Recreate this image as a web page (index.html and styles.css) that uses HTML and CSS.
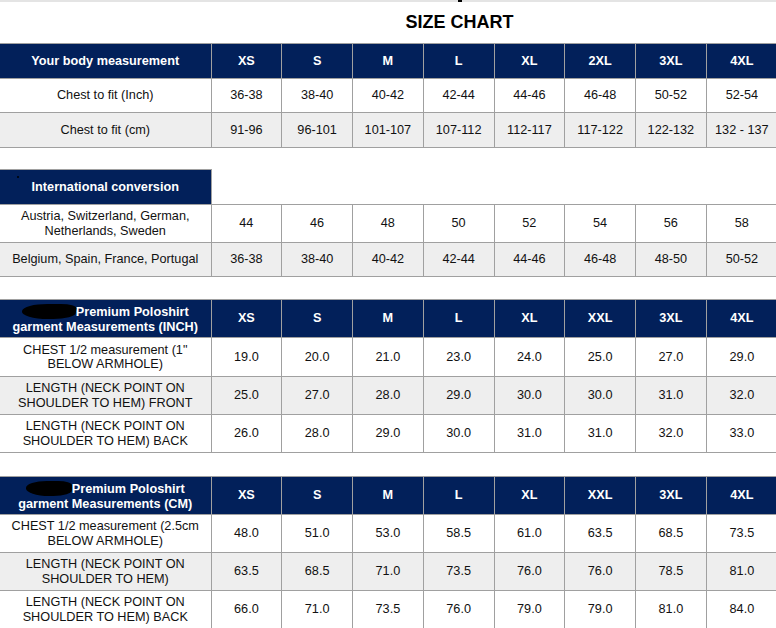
FILE: index.html
```html
<!DOCTYPE html>
<html lang="en">
<head>
<meta charset="utf-8">
<title>Size Chart</title>
<link rel="stylesheet" href="styles.css">
</head>
<body>
<div class="page">
  <div class="topline"><span class="tick"></span></div>
  <h1 class="title">SIZE CHART</h1>

  <table class="chart">
    <colgroup><col class="c-label"><col><col><col><col><col><col><col><col></colgroup>
    <tr class="h35 head">
      <td>Your body measurement</td><td>XS</td><td>S</td><td>M</td><td>L</td><td>XL</td><td>2XL</td><td>3XL</td><td>4XL</td>
    </tr>
    <tr class="h34">
      <td>Chest to fit (Inch)</td><td>36-38</td><td>38-40</td><td>40-42</td><td>42-44</td><td>44-46</td><td>46-48</td><td>50-52</td><td>52-54</td>
    </tr>
    <tr class="h35 alt">
      <td>Chest to fit (cm)</td><td>91-96</td><td>96-101</td><td>101-107</td><td>107-112</td><td>112-117</td><td>117-122</td><td>122-132</td><td>132 - 137</td>
    </tr>
  </table>

  <table class="chart gap22">
    <colgroup><col class="c-label"><col><col><col><col><col><col><col><col></colgroup>
    <tr class="h35 head partial">
      <td class="navy"><span class="dot"></span>International conversion</td><td class="blank"></td><td class="blank"></td><td class="blank"></td><td class="blank"></td><td class="blank"></td><td class="blank"></td><td class="blank"></td><td class="blank"></td>
    </tr>
    <tr class="h38">
      <td>Austria, Switzerland, German,<br>Netherlands, Sweden</td><td>44</td><td>46</td><td>48</td><td>50</td><td>52</td><td>54</td><td>56</td><td>58</td>
    </tr>
    <tr class="h34 alt">
      <td>Belgium, Spain, France, Portugal</td><td>36-38</td><td>38-40</td><td>40-42</td><td>42-44</td><td>44-46</td><td>46-48</td><td>48-50</td><td>50-52</td>
    </tr>
  </table>

  <table class="chart gap23">
    <colgroup><col class="c-label"><col><col><col><col><col><col><col><col></colgroup>
    <tr class="h38 head">
      <td class="two"><span class="redact r1"></span>Premium Poloshirt<br>garment Measurements (INCH)</td><td>XS</td><td>S</td><td>M</td><td>L</td><td>XL</td><td>XXL</td><td>3XL</td><td>4XL</td>
    </tr>
    <tr class="h39">
      <td>CHEST 1/2 measurement (1"<br>BELOW ARMHOLE)</td><td>19.0</td><td>20.0</td><td>21.0</td><td>23.0</td><td>24.0</td><td>25.0</td><td>27.0</td><td>29.0</td>
    </tr>
    <tr class="h38 alt">
      <td>LENGTH (NECK POINT ON<br>SHOULDER TO HEM) FRONT</td><td>25.0</td><td>27.0</td><td>28.0</td><td>29.0</td><td>30.0</td><td>30.0</td><td>31.0</td><td>32.0</td>
    </tr>
    <tr class="h38">
      <td>LENGTH (NECK POINT ON<br>SHOULDER TO HEM) BACK</td><td>26.0</td><td>28.0</td><td>29.0</td><td>30.0</td><td>31.0</td><td>31.0</td><td>32.0</td><td>33.0</td>
    </tr>
  </table>

  <table class="chart gap24">
    <colgroup><col class="c-label"><col><col><col><col><col><col><col><col></colgroup>
    <tr class="h38 head">
      <td class="two"><span class="redact r2"></span>Premium Poloshirt<br>garment Measurements (CM)</td><td>XS</td><td>S</td><td>M</td><td>L</td><td>XL</td><td>XXL</td><td>3XL</td><td>4XL</td>
    </tr>
    <tr class="h38">
      <td>CHEST 1/2 measurement (2.5cm<br>BELOW ARMHOLE)</td><td>48.0</td><td>51.0</td><td>53.0</td><td>58.5</td><td>61.0</td><td>63.5</td><td>68.5</td><td>73.5</td>
    </tr>
    <tr class="h38 alt">
      <td>LENGTH (NECK POINT ON<br>SHOULDER TO HEM)</td><td>63.5</td><td>68.5</td><td>71.0</td><td>73.5</td><td>76.0</td><td>76.0</td><td>78.5</td><td>81.0</td>
    </tr>
    <tr class="h38">
      <td>LENGTH (NECK POINT ON<br>SHOULDER TO HEM) BACK</td><td>66.0</td><td>71.0</td><td>73.5</td><td>76.0</td><td>79.0</td><td>79.0</td><td>81.0</td><td>84.0</td>
    </tr>
  </table>
</div>
</body>
</html>
```

FILE: styles.css
```css
html, body {
  margin: 0;
  padding: 0;
  background: #ffffff;
}

body {
  overflow: hidden;
}

.page {
  width: 778px;
  font-family: "Liberation Sans", Arial, sans-serif;
  color: #111111;
}

.topline {
  position: relative;
  height: 0;
  border-top: 2px solid #e4e4e4;
}

.tick {
  position: absolute;
  left: 458px;
  top: -2px;
  width: 4px;
  height: 2px;
  background: #000;
}

.title {
  margin: 0;
  height: 41px;
  padding-left: 141px;
  box-sizing: border-box;
  text-align: center;
  font-size: 18px;
  font-weight: bold;
  line-height: 41px;
  color: #000;
}

.chart {
  width: 777px;
  table-layout: fixed;
  border-collapse: collapse;
  border-spacing: 0;
  font-size: 12.7px;
  line-height: 14.5px;
}

.c-label {
  width: 211px;
}

.chart td {
  border: 1px solid #a0a0a0;
  padding: 0;
  text-align: center;
  vertical-align: middle;
  white-space: nowrap;
}

.chart td:first-child {
  border-left: none;
}

.chart td:last-child {
  border-right: none;
}

.gap22 { margin-top: 21px; }
.gap23 { margin-top: 22px; }
.gap24 { margin-top: 23px; }

.h34 { height: 34px; }
.h35 { height: 35px; }
.h38 { height: 38px; }
.h39 { height: 39px; }

.alt td {
  background: #eeeeee;
}

.head td {
  background: #02205a;
  color: #ffffff;
  font-weight: bold;
}

.head td.two {
  line-height: 15px;
  padding-top: 1px;
}

.partial td.blank {
  background: #ffffff;
  border-top: none;
  border-left: none;
  border-right: none;
}

.navy {
  position: relative;
}

.dot {
  position: absolute;
  left: 17px;
  top: 6px;
  width: 2px;
  height: 2px;
  border-radius: 50%;
  background: #000;
}

.redact {
  display: inline-block;
  vertical-align: -3px;
  height: 15px;
  background: #000;
  border-radius: 45% 30% 40% 50%;
}

.r1 {
  width: 54px;
  margin-right: 0;
  transform: skewX(-8deg);
}

.r2 {
  width: 46px;
  margin-right: 0;
}
```
